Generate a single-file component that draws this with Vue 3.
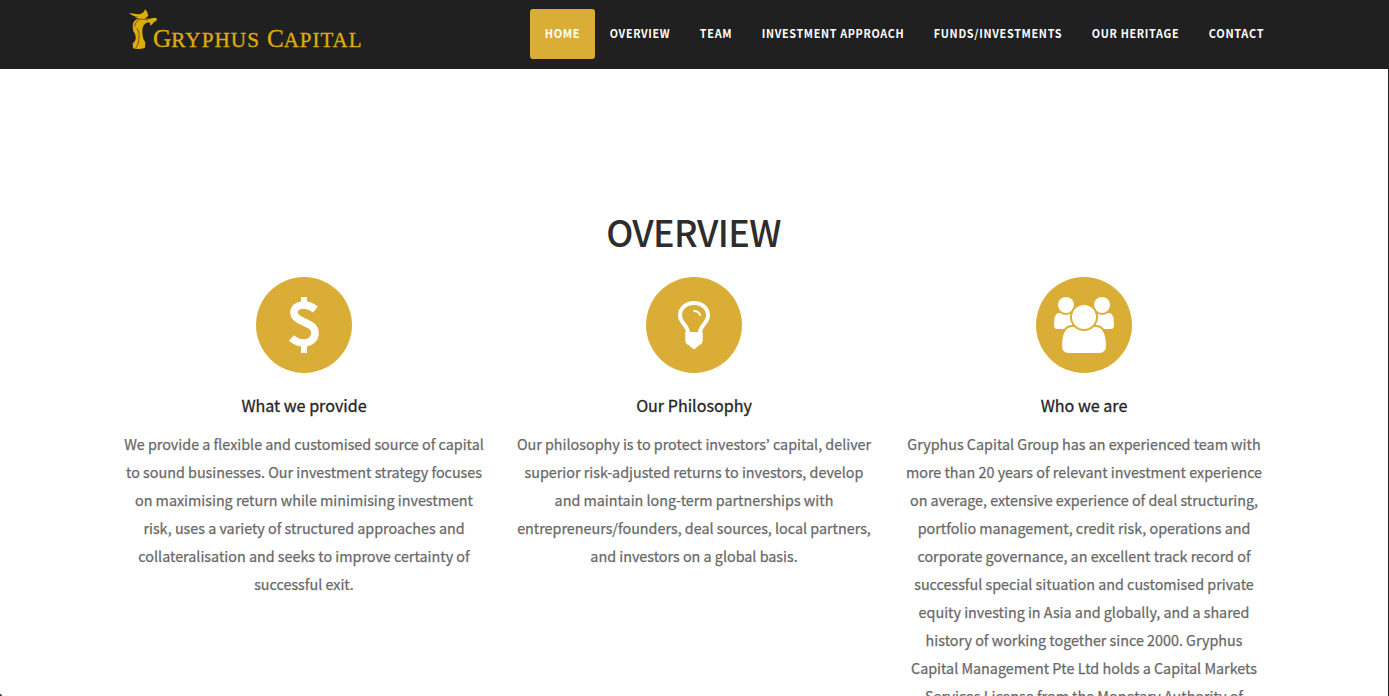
<script setup>
const links = [
  { text: 'HOME', w: 35 },
  { text: 'OVERVIEW', w: 60 },
  { text: 'TEAM', w: 32 },
  { text: 'INVESTMENT APPROACH', w: 142 },
  { text: 'FUNDS/INVESTMENTS', w: 128 },
  { text: 'OUR HERITAGE', w: 87 },
  { text: 'CONTACT', w: 55 },
]

const columns = [
  {
    icon: 'dollar',
    title: 'What we provide',
    lines: [
      'We provide a flexible and customised source of capital',
      'to sound businesses. Our investment strategy focuses',
      'on maximising return while minimising investment',
      'risk, uses a variety of structured approaches and',
      'collateralisation and seeks to improve certainty of',
      'successful exit.',
    ],
  },
  {
    icon: 'bulb',
    title: 'Our Philosophy',
    lines: [
      'Our philosophy is to protect investors’ capital, deliver',
      'superior risk-adjusted returns to investors, develop',
      'and maintain long-term partnerships with',
      'entrepreneurs/founders, deal sources, local partners,',
      'and investors on a global basis.',
    ],
  },
  {
    icon: 'group',
    title: 'Who we are',
    lines: [
      'Gryphus Capital Group has an experienced team with',
      'more than 20 years of relevant investment experience',
      'on average, extensive experience of deal structuring,',
      'portfolio management, credit risk, operations and',
      'corporate governance, an excellent track record of',
      'successful special situation and customised private',
      'equity investing in Asia and globally, and a shared',
      'history of working together since 2000. Gryphus',
      'Capital Management Pte Ltd holds a Capital Markets',
      'Services License from the Monetary Authority of',
    ],
  },
]
</script>

<template>
  <div class="page">
    <header class="header">
      <div class="container bar">
        <svg class="logo" width="250" height="60" viewBox="0 0 250 60" aria-label="Gryphus Capital">
          <g transform="scale(.33333)">
            <path fill="#dcac0c" d="M27 39 Q44 42 57 43 Q66 41 70 37 Q75 33 75 27 Q85 37 85 47 Q81 52 74 55 Q86 58 95 55 Q105 50 112 57 Q110 65 101 67 Q98 75 90 77 Q93 70 87 67 Q77 67 71 76 Q65 87 67 101 Q68 117 76 127 L75 143 Q58 150 39 145 L38 130 Q47 125 47 112 Q46 100 40 93 Q35 74 43 63 Q50 55 60 54 Q51 54 43 53 Q49 51 54 50 Q38 50 27 39Z" />
            <path fill="none" stroke="#202020" stroke-width="1.8" d="M44 80 Q46 61 63 57 Q75 57 84 61 M51 85 Q60 96 57 118 Q55 135 48 143" />
          </g>
          <g class="wordmark">
            <text x="33" y="46.700" textLength="107" lengthAdjust="spacingAndGlyphs"><tspan font-size="24.500">G</tspan><tspan font-size="20.500" letter-spacing="1">RYPHUS</tspan></text>
            <text x="147" y="46.700" textLength="95.500" lengthAdjust="spacingAndGlyphs"><tspan font-size="24.500">C</tspan><tspan font-size="20.500" letter-spacing="1">APITAL</tspan></text>
          </g>
        </svg>
        <nav class="nav">
          <a v-for="(l, i) in links" :key="l.text" class="link" :class="{ active: i === 0 }">
            <svg :width="l.w" height="20"><text x="-0.2" y="14" :textLength="l.w + 0.4" lengthAdjust="spacingAndGlyphs">{{ l.text }}</text></svg>
          </a>
        </nav>
      </div>
    </header>

    <main class="main">
      <h1 class="heading">OVERVIEW</h1>
      <div class="container columns">
        <section v-for="c in columns" :key="c.title" class="col">
          <div class="disc">
            <svg v-if="c.icon === 'dollar'" width="96" height="96" viewBox="0 0 96 96">
              <path fill="none" stroke="#fff" stroke-width="7.6" d="M59.500 32.500 Q54 28 48 28 C41.500 28 38 31.500 38 35.500 C38 46 59 44 59 56 C59 62 54 66 48 66 Q41 66 35.500 61" />
              <path fill="#fff" d="M45 20h6v8h-6zM45 66h6v10h-6z" />
            </svg>
            <svg v-else-if="c.icon === 'bulb'" width="96" height="96" viewBox="0 0 96 96">
              <path fill="none" stroke="#fff" stroke-width="4" d="M42.200 56.500 C42 48 34 46 34 38.500 C34 31 40 26 48 26 S62 31 62 38.500 C62 46 54 48 53.800 56.500" />
              <path fill="none" stroke="#fff" stroke-width="1.900" stroke-linecap="round" d="M48.200 34 Q52.500 34 54.200 38" />
              <path fill="#fff" d="M40.500 55h15q1.500 0 1.500 1.500q0 1-.8 1.500q.8.800.8 1.600t-.8 1.600q.8.800.8 1.600t-.8 1.600q.6 2.800-3.200 3.600q-1 2-2.600 2.400q-.8 1.600-2.400 1.600t-2.400-1.600q-1.600-.4-2.600-2.400q-3.800-.8-3.200-3.600q-.8-.8-.8-1.600t.8-1.600q-.8-.8-.8-1.600t.8-1.600q-.8-.5-.8-1.500q0-1.500 1.500-1.500z" />
            </svg>
            <svg v-else width="96" height="96" viewBox="0 0 96 96">
              <g class="people">
                <path d="M22 36 H38 V52 H21 Q18 52 18 48 Q18 37 22 36Z" />
                <path d="M74 36 H58 V52 H75 Q78 52 78 48 Q78 37 74 36Z" />
                <circle cx="30" cy="28" r="8" />
                <circle cx="66" cy="28" r="8" />
                <path d="M36.500 50 H59.500 C67 50 70 58 70 69 Q70 76 63 76 H33 Q26 76 26 69 C26 58 29 50 36.500 50Z" />
                <circle cx="48" cy="40" r="12" />
              </g>
            </svg>
          </div>
          <h2 class="title">{{ c.title }}</h2>
          <p class="body"><span v-for="t in c.lines" :key="t" class="line">{{ t }}</span></p>
        </section>
      </div>
    </main>
    <i class="edge"></i>
    <i class="corner"></i>
  </div>
</template>

<style>
body { margin: 0; background: #fff; overflow: hidden; }
</style>

<style scoped>
.page { position: relative; height: 696px; overflow: hidden; background: #fff; font-family: "Noto Sans CJK KR", "Noto Sans", sans-serif; }
.header { height: 69px; background: #202020; }
.container { width: 1170px; margin-left: 109px; }
.bar { display: flex; justify-content: space-between; align-items: flex-start; }
.logo { margin-left: 11px; flex: none; display: block; }
.wordmark { fill: #dcac0c; stroke: #dcac0c; stroke-width: .35px; font-family: "Liberation Serif", serif; }
.nav { display: flex; padding-top: 9px; }
.link { height: 50px; box-sizing: border-box; padding: 15px 15px 0; border-radius: 3px; }
.link.active { background: #daae36; }
.link svg { display: block; overflow: visible; }
.link text { fill: #fff; font-size: 11.3px; font-weight: 700; letter-spacing: .7px; }
.main { padding-top: 132px; }
.heading { margin: 0; padding-right: 2px; height: 76px; line-height: 60px; text-align: center; font-size: 36px; letter-spacing: -.65px; font-weight: 500; color: #2d2d2d; }
.columns { display: flex; }
.col { width: 390px; text-align: center; }
.disc { width: 96px; height: 96px; border-radius: 50%; background: #daae36; margin: 0 auto; }
.disc svg { display: block; }
.people { fill: #fff; stroke: #daae36; stroke-width: 4px; paint-order: stroke; }
.title { margin: 18px 0 11px; height: 28px; line-height: 28px; font-size: 16.1px; font-weight: 400; color: #252525; -webkit-text-stroke: .3px #252525; }
.body { margin: 0; color: #696969; font-size: 14.34px; line-height: 28px; -webkit-text-stroke: .25px #696969; }
.line { display: block; white-space: nowrap; }
.edge { position: absolute; right: 0; top: 69px; width: 1px; bottom: 0; background: #202020; }
.corner { position: absolute; left: 0; bottom: 0; width: 2px; height: 2px; background: #333; border-top-right-radius: 2px; }
</style>
